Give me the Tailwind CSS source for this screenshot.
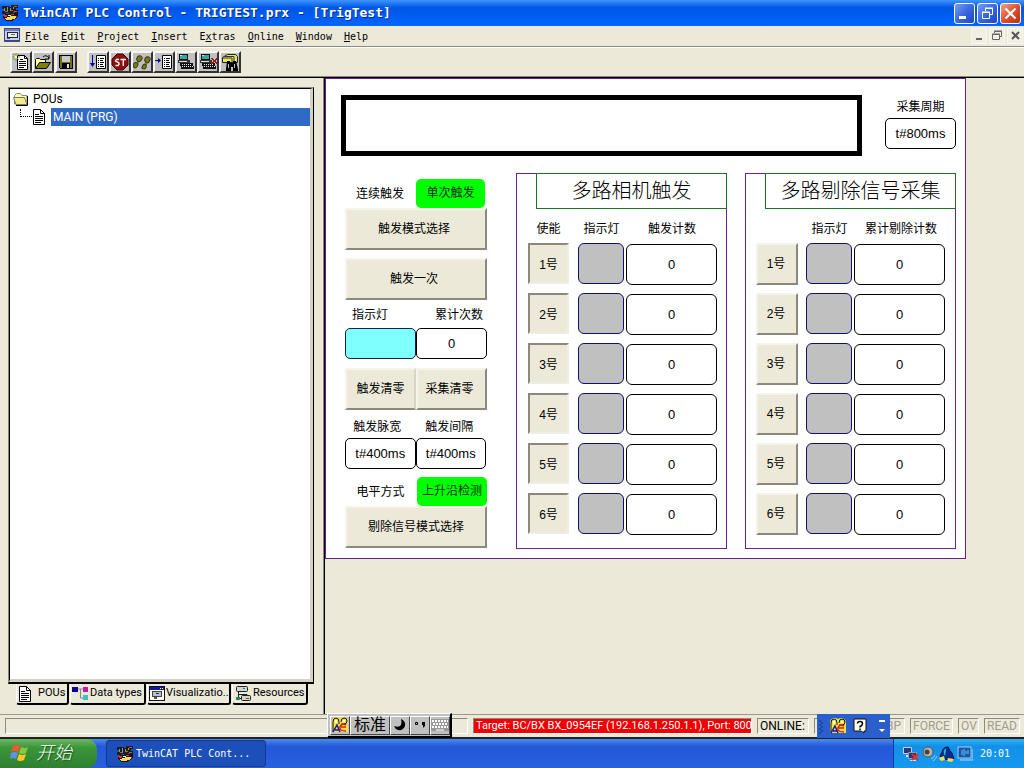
<!DOCTYPE html>
<html lang="zh-CN">
<head>
<meta charset="utf-8">
<meta name="viewport" content="width=device-width, initial-scale=1">
<title>TwinCAT PLC Control - TRIGTEST.prx - [TrigTest]</title>
<script src="https://cdn.jsdelivr.net/npm/@tailwindcss/browser@4"></script>
</head>
<body class="flex h-screen min-h-[600px] flex-col overflow-hidden bg-[#ece9d8] font-['Liberation_Sans','Noto_Sans_CJK_SC',sans-serif] text-xs text-black">

<!-- Shared icon shapes -->
<svg class="hidden" aria-hidden="true">
  <symbol id="app" viewBox="0 0 16 16">
    <path d="M0 1h7v1h2V0h7v3h-2v2h2v4h-3V7h-2v2H7V8H4v1H0V6h2V4H0z" fill="#16201c"/>
    <path d="M2 3h1v3H2zM5 2h1v4H5zM8 3h1v3H8zM11 2h1v2h-1z" fill="#7e9c94"/>
    <path d="M3 6h3v1H3zM9 5h2v1H9zM12 1h3v1h-3zM12 6h3v1h-3z" fill="#d8502c"/>
    <path d="M1 10l4-1h5l2-1h4v4l-3 2-3 2H4l-3-3z" fill="#201008"/>
    <path d="M1 10h4v2H2zM9 9h3v1H9zM12 11h3v1h-3z" fill="#e03820"/>
    <path d="M3 13h3l3-2h5v2l-3 1-2 1H4z" fill="#f8dc50"/>
    <path d="M6 10h3v1H6zM5 12h2v1H5z" fill="#fff4c0"/>
  </symbol>
  <symbol id="doc" viewBox="0 0 14 16">
    <path d="M1.500 .5h7l4 4v11h-11z" fill="#fff" stroke="#000"/>
    <path d="M8.500 .5v4h4M3 5.500h4M3 7.500h8M3 9.500h8M3 11.500h8M3 13.500h6" fill="none" stroke="#000"/>
  </symbol>
  <symbol id="folder" viewBox="0 0 16 14">
    <path d="M1.500 12V3.500l2-2h4l1.500 2h5V12z" fill="#ffff9c" stroke="#888"/>
    <path d="M.5 5.500h11l2.500 7H3z" fill="#f4ec88" stroke="#777"/>
    <path d="M14.500 4v9.500H3" fill="none" stroke="#000"/>
  </symbol>
  <symbol id="vis" viewBox="0 0 16 15">
    <path d="M.5 .5h15v14H.5z" fill="#fff" stroke="#111"/>
    <path d="M1 1h14v3H1z" fill="#1018a0"/>
    <path d="M11 2h1v1h-1zM13 2h1v1h-1z" fill="#fff"/>
    <path d="M3 5h10v6H3z" fill="#444"/><path d="M4 6h8v4H4z" fill="#b4c4c0"/>
    <path d="M7 7h3v1H7z" fill="#234"/><path d="M5 11h3v2H5z" fill="#555"/>
  </symbol>
  <symbol id="pc" viewBox="0 0 18 18">
    <path d="M2 1h9v7H2z" fill="#111"/><path d="M3 2h7v4H3z" fill="#38a89c"/><path d="M3 2h2v1H3z" fill="#c8f0e8"/>
    <path d="M1 7h12v3H1z" fill="#333"/><path d="M2 8h8v1H2z" fill="#e0e0e0"/>
    <path d="M3 10h13l1 6H4z" fill="#111"/>
    <path d="M5 11h1v1H5zM7 11h1v1H7zM9 11h1v1H9zM11 11h1v1h-1zM13 11h1v1h-1zM5 13h1v1H5zM7 13h1v1H7zM9 13h1v1H9zM11 13h1v1h-1zM13 13h1v1h-1zM15 13h1v1h-1z" fill="#e8e8e8"/>
  </symbol>
  <symbol id="page" viewBox="0 0 10 14">
    <path d="M.5 .5h9v13h-9z" fill="#fff" stroke="#000"/>
    <path d="M2 3.500h1M4 3.500h4M2 5.500h1M4 5.500h3M2 7.500h1M4 7.500h4M2 9.500h1M4 9.500h3M2 11.500h1M4 11.500h4" stroke="#000"/>
  </symbol>
  <symbol id="ime" viewBox="0 0 16 16">
    <path d="M0 4q0-3 4-4 2 0 4 1 2-1 4-1 4 1 4 4v11H0z" fill="#f6e23c"/>
    <path d="M1 15V5q0-4 3-4t3 4v2M9 5q0-4 3-4t3 3-3 3H9" fill="none" stroke="#111"/>
    <path d="M1 15l4-7 3 7M3 13h4" fill="none" stroke="#1515b0" stroke-width="1.500"/>
    <path d="M14 8q-5-2-6 2t6 4M9 10h5" fill="none" stroke="#d42020" stroke-width="1.500"/>
    <path d="M3 3h2v3H3zM11 3h2v2h-2z" fill="#fff"/>
  </symbol>
</svg>

<!-- Title bar -->
<header class="flex h-[26px] shrink-0 items-center bg-linear-to-b from-[#3d95ff] via-[#0055e5] via-30% to-[#0066ff] pr-[3px] pl-[2px]">
  <svg class="size-4" shape-rendering="crispEdges"><use href="#app"/></svg>
  <h1 class="ml-[5px] flex-1 truncate font-['DejaVu_Sans_Mono',monospace] text-[13px] font-bold whitespace-pre text-white [text-shadow:1px_1px_0_#0a2a80]">TwinCAT PLC Control - TRIGTEST.prx - [TrigTest]</h1>
  <div class="flex gap-[2px]">
    <button aria-label="Minimize" class="size-[21px] rounded-[3px] border border-white bg-linear-to-br from-[#7a9cf0] via-[#3a68e0] to-[#1c46c0]"><svg viewBox="0 0 19 19"><path d="M4 12h7v3H4z" fill="#fff"/></svg></button>
    <button aria-label="Restore" class="size-[21px] rounded-[3px] border border-white bg-linear-to-br from-[#7a9cf0] via-[#3a68e0] to-[#1c46c0]"><svg viewBox="0 0 19 19"><path d="M7.500 7V4.500h7v6H12M4.500 8.500h7v6h-7zM4 8h8M7 4h8" fill="none" stroke="#fff"/></svg></button>
    <button aria-label="Close" class="size-[21px] rounded-[3px] border border-white bg-linear-to-br from-[#f0a088] via-[#e0502c] to-[#b83010]"><svg viewBox="0 0 19 19"><path d="M4.500 4.500l10 10M14.500 4.500l-10 10" stroke="#fff" stroke-width="2.200"/></svg></button>
  </div>
</header>

<!-- Menu bar -->
<nav class="flex h-[21px] shrink-0 items-center border-b border-[#8c8a7e] pr-px pl-1">
  <svg class="mb-[3px] h-[14px] w-4" viewBox="0 0 16 14" shape-rendering="crispEdges"><path d="M0 0h16v14H0z" fill="#384888"/><path d="M1 2h14v10H1z" fill="#c8cce4"/><path d="M1 1h14v2H1z" fill="#7080b8"/><path d="M3 4h11v6H3z" fill="#223"/><path d="M4 5h9v4H4z" fill="#e4ecec"/><path d="M7 6h4v1H7z" fill="#667"/><path d="M3 10h3v1H3z" fill="#556"/></svg>
  <div class="ml-[5px] flex flex-1 gap-3 pt-px font-['DejaVu_Sans_Mono',monospace] text-[10px]">
    <button><u>F</u>ile</button><button><u>E</u>dit</button><button><u>P</u>roject</button><button><u>I</u>nsert</button><button>E<u>x</u>tras</button><button><u>O</u>nline</button><button><u>W</u>indow</button><button><u>H</u>elp</button>
  </div>
  <div class="flex gap-[2px]">
    <button aria-label="Minimize document" class="size-4 border border-[#f8f6ee] bg-[#f1efe4]"><svg viewBox="0 0 14 14"><path d="M4 9h6v2H4z" fill="#666"/></svg></button>
    <button aria-label="Restore document" class="size-4 border border-[#f8f6ee] bg-[#f1efe4]"><svg viewBox="0 0 14 14"><path d="M4.500 4V2.500h7v5H10M2.500 5.500h7v5h-7zM2 5h8M4 2h8" fill="none" stroke="#666"/></svg></button>
    <button aria-label="Close document" class="size-4 border border-[#f8f6ee] bg-[#f1efe4]"><svg viewBox="0 0 14 14"><path d="M4 3l7 7M11 3l-7 7" stroke="#555" stroke-width="2"/></svg></button>
  </div>
</nav>

<!-- Tool bar -->
<div class="flex h-[31px] shrink-0 items-center border-t border-b border-t-white border-b-black pb-[2px] pl-[10px] shadow-[inset_0_-1px_0_#8c8a7e] [&>button]:size-[22px] [&>button]:border-2 [&>button]:border-t-[#f4f4f4] [&>button]:border-r-[#333] [&>button]:border-b-[#333] [&>button]:border-l-[#f4f4f4] [&>button]:bg-[#c0c0c0] [&>button>svg]:size-[18px]">
  <button aria-label="New"><svg viewBox="0 0 18 18"><path d="M5.500 2.500h7l3 3v11h-10z" fill="#fff" stroke="#000"/><path d="M12.500 2.500v3h3M7 8.500h7M7 10.500h7M7 12.500h7M7 14.500h5M8 6.500h3" fill="none" stroke="#000"/><path d="M4 0v8M0 4h8M1 1l6 6M7 1L1 7" stroke="#8a8a20" stroke-dasharray="2 1"/><path d="M3 3h2v2H3z" fill="#ffff80"/></svg></button>
  <button aria-label="Open"><svg viewBox="0 0 18 18"><path d="M1.500 15V6.500l1-1h3l1 1h5V9" fill="#ffff9c" stroke="#000"/><path d="M1.500 15.500l4-6h11l-4 6z" fill="#808000" stroke="#000"/><path d="M9 4q3-3 6 1M15 2v4h-4" fill="none" stroke="#000"/></svg></button>
  <button aria-label="Save" class="ml-px"><svg viewBox="0 0 18 18" shape-rendering="crispEdges"><path d="M2 2h14v14H3l-1-1z" fill="#000"/><path d="M3 3h12v12H3z" fill="#707018"/><path d="M5 3h8v6H5z" fill="#c8c8c8"/><path d="M5 10h8v6H5z" fill="#000"/><path d="M10 11h2v4h-2z" fill="#ddd"/></svg></button>
  <button aria-label="Run" class="ml-[10px]"><svg viewBox="0 0 18 18"><use href="#page" x="7" y="2" width="10" height="14"/><path d="M3.500 2v9" stroke="#00009c"/><path d="M1 10h5l-2.500 4z" fill="#00009c"/></svg></button>
  <button aria-label="Stop"><svg viewBox="0 0 18 18"><path d="M6 1h6l5 5v6l-5 5H6l-5-5V6z" fill="#8c1010" stroke="#400"/><path d="M8 6.500H5.500L4.500 8l3.500 2v1.500l-1 1H4.500M9.500 6.500H15M12.250 6.500V13" fill="none" stroke="#fff" stroke-width="1.300"/></svg></button>
  <button aria-label="Step over"><svg viewBox="0 0 18 18"><path d="M5 3q5-1 4 3-1 3-4 3-3-3 0-6zM0 12q1-4 5-2 0 5-3 5-3-1-2-3zM13 4q5-1 4 3-1 4-4 3-3-3 0-6zM9 14q1-4 4-3 1 5-2 5-3 0-2-2z" fill="#77771c" stroke="#333310"/></svg></button>
  <button aria-label="Step in"><svg viewBox="0 0 18 18"><use href="#page" x="7" y="2" width="10" height="14"/><path d="M0 7.500h4" stroke="#00009c"/><path d="M3 5l3 2.500L3 10z" fill="#00009c"/></svg></button>
  <button aria-label="Login"><svg viewBox="0 0 18 18" shape-rendering="crispEdges"><use href="#pc" width="18" height="18"/></svg></button>
  <button aria-label="Logout"><svg viewBox="0 0 18 18" shape-rendering="crispEdges"><use href="#pc" width="18" height="18"/><path d="M13 5l5 6M18 5l-5 6" stroke="#a01818" stroke-width="1.500"/></svg></button>
  <button aria-label="Search"><svg viewBox="0 0 18 18"><path d="M1.500 9.500v-5l5-3h8l2 2v6z" fill="#e8e860" stroke="#222"/><path d="M2 5h9v5M4 3.500h9V9" fill="none" stroke="#333"/><path d="M6 8h3v2h3V8h3l2 8v2h-5v-4h-2v4H5v-2z" fill="#000"/><path d="M7 11h1v4H7zM13 11h1v4h-1z" fill="#bbb"/></svg></button>
</div>

<!-- Work area -->
<div class="flex min-h-0 flex-1">
  <aside class="flex w-[324px] shrink-0 flex-col border-r border-[#8c8a7e] pt-[9px] pr-[9px] pb-[9px] pl-2">
    <div class="min-h-0 flex-1 border-t border-r border-b-2 border-l border-t-[#8c8a7e] border-r-black border-b-black border-l-[#8c8a7e]">
      <div class="h-full border-t border-r-[3px] border-b-[3px] border-l border-t-black border-r-[#d6d2c2] border-b-[#d6d2c2] border-l-black bg-white pt-px font-['Roboto',sans-serif] text-xs">
        <ul>
          <li>
            <div class="flex h-[18px] items-center pl-[3px]"><svg class="mr-1 h-[14px] w-4"><use href="#folder"/></svg>POUs</div>
            <ul>
              <li class="flex h-[18px] items-center pl-[10px]"><span class="mb-2 h-2 w-3 border-b border-l border-dotted border-black"></span><svg class="mr-[5px] h-4 w-[14px]"><use href="#doc"/></svg><a href="#main" class="h-[18px] flex-1 bg-[#316ac5] pl-[2px] leading-[18px] text-white">MAIN (PRG)</a></li>
            </ul>
          </li>
        </ul>
      </div>
    </div>
    <div class="flex gap-px pl-2 font-['Roboto',sans-serif] text-[11px] [&>button]:flex [&>button]:h-[21px] [&>button]:items-center [&>button]:rounded-b-[3px] [&>button]:border-r-2 [&>button]:border-b-2 [&>button]:border-l [&>button]:border-r-black [&>button]:border-b-black [&>button]:border-l-white [&>button]:whitespace-nowrap">
      <button class="w-[53px] pl-px"><svg class="mr-[6px] h-4 w-[14px] shrink-0"><use href="#doc"/></svg>POUs</button>
      <button class="w-[76px] pl-px"><svg class="mr-[2px] h-4 w-4 shrink-0" viewBox="0 0 16 16"><path d="M6 3h6M8.500 3v9H12" fill="none" stroke="#888"/><path d="M0 1h6v5H0z" fill="#0a0a90"/><path d="M11 1h5v5h-5z" fill="#c818a8"/><path d="M11 9h5v5h-5z" fill="#30c8c0"/></svg>Data types</button>
      <button class="w-[84px] pl-px"><svg class="mr-px h-[15px] w-4 shrink-0" shape-rendering="crispEdges"><use href="#vis"/></svg>Visualizatio..</button>
      <button class="w-[76px] pl-[2px]"><svg class="mr-[2px] h-4 w-4 shrink-0" viewBox="0 0 16 16"><path d="M3.500 6v6.500H8M3.500 8.500H12V10" fill="none" stroke="#222"/><rect x="1.500" y=".5" width="11" height="5" rx="1" fill="#c8d8d0" stroke="#222"/><rect x="6.500" y="9.500" width="9" height="5" rx="1" fill="#c8d8d0" stroke="#222"/><path d="M8 2h2v1H8zM1 11h4v3H1z" fill="#285"/><path d="M11 12h3v1h-3z" fill="#d22"/></svg>Resources</button>
    </div>
  </aside>

  <!-- Visualization -->
  <div class="min-w-0 flex-1 border-l border-black">
    <main id="main" class="w-full max-w-[641px] border border-[#641e96] bg-white pt-4 pr-[9px] pb-[9px] pl-[15px] text-[13px]">
      <div class="flex gap-[23px]">
        <output aria-label="消息" class="h-[61px] flex-1 border-[5px] border-black"></output>
        <label class="flex w-[71px] flex-col items-center pt-1"><span class="mb-[3px] text-xs">采集周期</span>
          <input value="t#800ms" class="h-[31px] w-full rounded-[5px] border border-black text-center"></label>
      </div>

      <div class="mt-[17px] flex justify-between pl-1">
        <!-- Trigger controls -->
        <section class="w-[142px] pt-[6px] text-xs">
          <div class="grid h-[29px] grid-cols-2 items-center pr-[2px] text-center"><span>连续触发</span><output class="ml-px h-[29px] rounded-[5px] bg-[#00ff00] leading-[29px] text-[#103010]">单次触发</output></div>
          <button class="block h-[42px] w-full border-2 border-t-[#f6f4ea] border-r-[#8c887c] border-b-[#8c887c] border-l-[#f6f4ea] bg-[#ece9d8] pr-1">触发模式选择</button>
          <button class="mt-2 block h-[42px] w-full border-2 border-t-[#f6f4ea] border-r-[#8c887c] border-b-[#8c887c] border-l-[#f6f4ea] bg-[#ece9d8] pr-1">触发一次</button>
          <div class="flex h-7 items-center justify-between pt-px pr-1 pl-[7px]"><span>指示灯</span><span>累计次数</span></div>
          <div class="grid h-[31px] grid-cols-2"><output aria-label="指示灯" class="rounded-[5px] border border-[#102050] bg-[#80ffff]"></output><output aria-label="累计次数" class="rounded-[5px] border border-black text-center text-[13px] leading-[29px]">0</output></div>
          <div class="mt-[9px] grid h-[42px] grid-cols-2">
            <button class="border-2 border-t-[#f6f4ea] border-r-[#d8d4c6] border-b-[#8c887c] border-l-[#f6f4ea] bg-[#ece9d8]">触发清零</button>
            <button class="border-2 border-t-[#f6f4ea] border-r-[#8c887c] border-b-[#8c887c] border-l-[#f6f4ea] bg-[#ece9d8] pr-1">采集清零</button>
          </div>
          <div class="mt-[7px] grid grid-cols-2 pr-px text-center leading-[21px]">
            <label for="width" class="pr-[6px]">触发脉宽</label><label for="gap" class="pr-[3px]">触发间隔</label>
            <input id="width" value="t#400ms" class="h-[31px] min-w-0 rounded-[5px] border border-black text-center text-[13px]">
            <input id="gap" value="t#400ms" class="h-[31px] min-w-0 rounded-[5px] border border-black text-center text-[13px]">
          </div>
          <div class="mt-2 grid h-[29px] grid-cols-2 items-center text-center"><span>电平方式</span><output class="ml-px h-[29px] rounded-[5px] bg-[#00ff00] leading-[29px] text-[#103010]">上升沿检测</output></div>
          <button class="block h-[42px] w-full border-2 border-t-[#f6f4ea] border-r-[#8c887c] border-b-[#8c887c] border-l-[#f6f4ea] bg-[#ece9d8]">剔除信号模式选择</button>
        </section>

        <div class="flex gap-[18px]">
          <!-- Camera triggers -->
          <section class="h-[376px] w-[211px] border border-[#6e1e96]">
            <h2 class="-mt-px -mr-px ml-[19px] flex h-9 items-center justify-center border border-[#207028] text-[20px] font-light">多路相机触发</h2>
            <table class="ml-[11px] w-[190px] table-fixed border-separate border-spacing-0 text-center">
              <colgroup><col class="w-[41px]"><col class="w-[65px]"><col></colgroup>
              <thead class="text-xs"><tr class="h-[34px]"><th class="p-0 pt-[6px] font-normal">使能</th><th class="p-0 pt-[6px] font-normal">指示灯</th><th class="p-0 pt-[6px] pr-2 font-normal">触发计数</th></tr></thead>
              <tbody id="cam"></tbody>
            </table>
          </section>
          <!-- Reject signals -->
          <section class="h-[376px] w-[211px] border border-[#6e1e96]">
            <h2 class="-mt-px -mr-px ml-[19px] flex h-9 items-center justify-center border border-[#207028] text-[20px] font-light">多路剔除信号采集</h2>
            <table class="ml-[10px] w-[190px] table-fixed border-separate border-spacing-0 text-center">
              <colgroup><col class="w-[41px]"><col class="w-[65px]"><col></colgroup>
              <thead class="text-xs"><tr class="h-[34px]"><td class="p-0"></td><th class="p-0 pt-[6px] font-normal">指示灯</th><th class="p-0 pt-[6px] pr-[6px] font-normal">累计剔除计数</th></tr></thead>
              <tbody id="rej"></tbody>
            </table>
          </section>
        </div>
      </div>
    </main>
  </div>
</div>

<!-- Status bar -->
<footer class="relative flex h-[25px] shrink-0 items-center gap-[5px] border-t border-b-2 border-t-[#9c998c] border-b-[#222] pr-1 pl-[5px] font-['Roboto','Noto_Sans_CJK_SC',sans-serif] text-[11px] text-[#a09d90] [&>span]:h-4 [&>span]:border [&>span]:border-t-[#8c8a7e] [&>span]:border-r-white [&>span]:border-b-white [&>span]:border-l-[#8c8a7e] [&>span]:pl-[2px] [&>span]:leading-[14px] [&>span]:whitespace-nowrap">
  <span class="flex-1"></span>
  <span class="w-[279px] bg-[#f00000] text-white">Target: BC/BX BX_0954EF (192.168.1.250.1.1), Port: 800</span>
  <span class="w-[52px] text-xs text-black">ONLINE:</span>
  <span class="w-[64px]"></span>
  <span class="w-[22px] text-xs">BP</span>
  <span class="w-[43px] text-xs">FORCE</span>
  <span class="w-[21px] text-xs">OV</span>
  <span class="w-[36px] text-xs">READ</span>

  <!-- Floating input-method bar -->
  <div class="absolute -top-[2px] left-[327px] flex h-[25px] w-[125px] items-center border border-r-2 border-b-2 border-t-white border-r-black border-b-black border-l-white bg-[#c0c0c0] pl-[2px] text-black [&>button]:flex [&>button]:h-[19px] [&>button]:items-center [&>button]:justify-center [&>button]:border [&>button]:border-t-white [&>button]:border-r-[#444] [&>button]:border-b-[#444] [&>button]:border-l-white">
    <button aria-label="输入法" class="w-[20px]"><svg class="size-4"><use href="#ime"/></svg></button>
    <button class="w-10 text-base">标准</button>
    <button aria-label="半角" class="w-5"><svg class="size-3" viewBox="0 0 12 12"><path d="M7 0q5 2 4 7-2 5-7 4-3-1-4-4 5 2 7-1 1-3 0-6z" fill="#000"/></svg></button>
    <button aria-label="标点" class="w-5"><svg class="h-2 w-3" viewBox="0 0 12 8"><path d="M1.500 1.500h2v2h-2z" fill="none" stroke="#000"/><path d="M8 1h3v4L9 7V4H8z" fill="#000"/></svg></button>
    <button aria-label="软键盘" class="w-5"><svg class="h-3 w-[18px]" viewBox="0 0 18 12"><path d="M0 0h18v12H0z" fill="#999"/><path d="M1 2h16M2 5h15M1 8h16" stroke="#fff" stroke-width="2" stroke-dasharray="2 1"/><path d="M5 11h8" stroke="#fff"/></svg></button>
  </div>

  <!-- Floating language bar -->
  <div class="absolute -top-px left-[817px] flex h-6 w-[73px] items-center bg-[#2b5fcb] pl-[2px]">
    <svg class="h-4 w-1" viewBox="0 0 4 16"><path d="M1 2v2M1 6v2M1 10v2M1 14v2M3 4v2M3 8v2M3 12v2" stroke="#0c2f80"/></svg>
    <button aria-label="输入法" class="ml-[7px]"><svg class="block size-4"><use href="#ime"/></svg></button>
    <button aria-label="帮助" class="ml-[7px]"><svg class="block h-4 w-[14px]" viewBox="0 0 14 16"><path d="M1 1h12v12h-2v2l-3-2H1z" fill="#fffff0" stroke="#111"/><path d="M4.500 5.500q0-2 2.500-2t2.500 2-2.500 3v1M7 10.500V12" fill="none" stroke="#000" stroke-width="1.500"/></svg></button>
    <button aria-label="选项" class="ml-[11px]"><svg class="block h-4 w-2" viewBox="0 0 8 16"><path d="M1 2h6v2H1zM1 11h6l-3 3z" fill="#fff"/></svg></button>
  </div>
</footer>

<!-- Task bar -->
<div class="flex h-[29px] shrink-0 items-stretch bg-linear-to-b from-[#4a8cf0] via-[#2458d8] via-25% to-[#2860e0] font-['DejaVu_Sans_Mono','Noto_Sans_CJK_SC',monospace] text-[10px] text-white">
  <button class="flex w-[97px] items-center rounded-r-[10px] bg-linear-to-b from-[#6cb868] via-[#3a963a] via-30% to-[#2f8030] pb-[5px] pl-[10px] font-['Noto_Sans_CJK_SC',sans-serif] text-[18px] leading-none font-light italic [text-shadow:1px_1px_1px_#1a4a1a]">
    <svg class="mt-[3px] mr-[6px] size-5" viewBox="0 0 20 20"><path d="M3 3q3-2 7 0L8 9Q5 7 1 9z" fill="#f0592a"/><path d="M11 4q4 2 7 0l-2 6q-3 2-7 0z" fill="#8cc63c"/><path d="M1 10q4-2 7 0l-2 6q-3-2-6 0z" fill="#5a94f0"/><path d="M9 11q3 2 7 0l-2 6q-4 2-7 0z" fill="#fcc822"/></svg>开始</button>
  <button class="my-px ml-[9px] flex w-40 items-center rounded-[3px] border border-[#163a90] bg-[#1c4fb8] pl-[10px]"><svg class="mr-[3px] size-4 shrink-0" shape-rendering="crispEdges"><use href="#app"/></svg>TwinCAT PLC Cont...</button>
  <div class="ml-auto flex w-[131px] items-center gap-[2px] border-l border-[#0c3c98] bg-linear-to-b from-[#30b4f8] via-[#1290e8] via-25% to-[#149af0] pl-[9px]">
    <svg class="size-4" viewBox="0 0 16 16"><path d="M.5 1.500h8v6h-8z" fill="#223a78" stroke="#ccd"/><path d="M5.500 6.500h8v6h-8z" fill="#223a78" stroke="#99a"/><path d="M3 9h2v2H3zM7 14h6v1H7z" fill="#dde"/><path d="M9 8l6 6M15 8l-6 6" stroke="#e03028" stroke-width="2"/></svg>
    <svg class="size-4" viewBox="0 0 16 16"><circle cx="7" cy="6" r="5" fill="#b8b6a8" stroke="#555"/><circle cx="6" cy="6" r="2.500" fill="#444"/><path d="M10 13q3-1 4-4M12 15q3-2 4-5" fill="none" stroke="#9cc8f0"/></svg>
    <svg class="size-4" viewBox="0 0 16 16"><path d="M3 6q1-5 6-5 2 4 4 6l2 6-5 1-5-1-4-3z" fill="#0a2c98" stroke="#001040"/><path d="M7 2q-4 3-1 8 1-5 1-8z" fill="#20c8c8"/><path d="M0 12l5-2 1 4-4 1z" fill="#f4e040"/><path d="M9 12l6 1-2 3-5-1z" fill="#f4e040"/></svg>
    <svg class="size-4" viewBox="0 0 16 16"><path d="M1 1h13v11H1z" fill="#1858a8" stroke="#a8d0f0"/><path d="M5 4v5M7 3v7M9 5v3M11 4v4" stroke="#68c0f0"/><path d="M3 14h13V3" fill="none" stroke="#b8d8f0"/></svg>
    <time class="ml-[5px]">20:01</time>
  </div>
</div>

<script>
  // Channel rows of the two tables; camera enables are latched (sunken), reject channels are raised.
  const styles = {
    cam: 'block h-[41px] w-[41px] border-2 border-t-[#8c887c] border-l-[#8c887c] border-r-[#f0eee2] border-b-[#f0eee2] bg-[#ece9d8] pt-[2px] text-xs',
    rej: 'block h-[42px] w-[42px] border-2 border-t-[#f6f4ea] border-l-[#f6f4ea] border-r-[#8c887c] border-b-[#8c887c] bg-[#ece9d8] pr-[2px] text-xs'
  };
  for (const id of ['cam', 'rej']) {
    let rows = '';
    for (let n = 1; n <= 6; n++) {
      rows += `<tr class="h-[50px] align-top"><td class="p-0"><button class="${styles[id]}">${n}号</button></td>` +
        `<td class="p-0 pl-[9px]"><output aria-label="${n}号指示灯" class="block h-[41px] w-[46px] rounded-[6px] border border-[#10106a] bg-[#c0c0c0]"></output></td>` +
        `<td class="p-0 pt-px"><output class="-ml-2 block h-[41px] w-[91px] rounded-[6px] border border-black leading-[39px]">0</output></td></tr>`;
    }
    document.getElementById(id).innerHTML = rows;
  }
</script>
</body>
</html>
